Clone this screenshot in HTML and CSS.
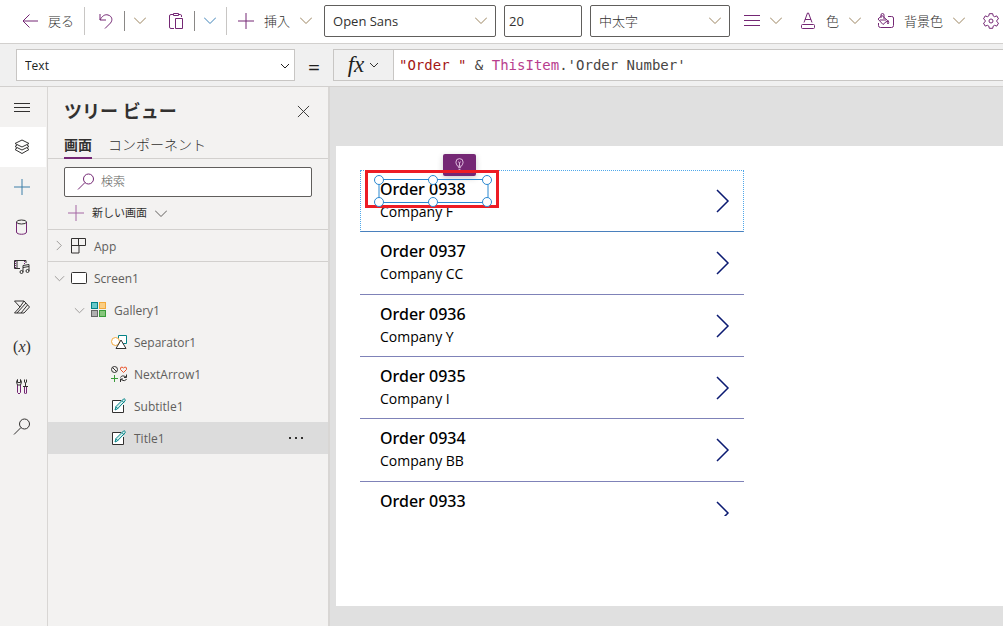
FILE: index.html
```html
<!DOCTYPE html>
<html lang="ja">
<head>
<meta charset="utf-8">
<title>ツリー ビュー</title>
<link rel="stylesheet" href="styles.css">
</head>
<body>
<svg class="defs" aria-hidden="true">
  <symbol id="chev" viewBox="0 0 12 7"><path d="M0 .5l6 6 6-6"/></symbol>
  <symbol id="plus" viewBox="0 0 16 16"><path d="M8 0v16M0 8h16"/></symbol>
  <symbol id="search" viewBox="0 0 18 18"><circle cx="11.5" cy="6" r="5"/><path d="M8 9.500L1 16.500"/></symbol>
  <symbol id="lines" viewBox="0 0 16 12"><path d="M0 .5h16M0 5.500h16M0 10.500h16"/></symbol>
  <symbol id="edit" viewBox="0 0 16 16"><path class="ink" fill="#fff" d="M10 2.500H1.500v12h11V7"/><path fill="#d7efee" stroke="#038387" d="M4 12l1-3.500L12.500 1q1-.5 1.500.3t0 1.600L6.500 10.800z"/><path stroke="#038387" d="M5 8.800l2 2M11 2.700l2 2"/></symbol>
</svg>
<header class="toolbar">
  <button class="tool back"><svg class="i16" viewBox="0 0 16 16"><path d="M16 8H1M7.500 1.500L1 8l6.500 6.500"/></svg><span>戻る</span></button>
  <i class="rule"></i>
  <button class="tool wide" aria-label="元に戻す"><svg class="i16" viewBox="0 0 16 16"><path d="M2 1v6h6M2 7C4 3 7 1 10 2c4 1 5 5 2.500 8L7 15.500"/></svg></button>
  <i class="rule short"></i>
  <button class="tool after" aria-label="元に戻すオプション"><svg class="chev"><use href="#chev"/></svg></button>
  <button class="tool clip" aria-label="貼り付け"><svg class="clipicon" viewBox="0 0 16 18"><path d="M6 16.500H3Q1.500 16.500 1.500 15V4Q1.500 2.500 3 2.500H5M11 2.500h1.500Q13.500 2.500 13.500 4v1M5.500 1.500h5v2h-5zM7.500 6.500h7v10h-7z"/></svg></button>
  <i class="rule short"></i>
  <button class="tool after blue" aria-label="貼り付けオプション"><svg class="chev"><use href="#chev"/></svg></button>
  <i class="rule"></i>
  <button class="tool insert"><svg class="i16"><use href="#plus"/></svg><span>挿入</span><svg class="chev"><use href="#chev"/></svg></button>
  <label class="field font"><select aria-label="フォント"><option>Open Sans</option></select><svg class="chev"><use href="#chev"/></svg></label>
  <label class="field size"><input aria-label="フォント サイズ" value="20"></label>
  <label class="field weight"><select aria-label="フォントの太さ"><option>中太字</option></select><svg class="chev"><use href="#chev"/></svg></label>
  <button class="tool align" aria-label="配置"><svg class="lines"><use href="#lines"/></svg><svg class="chev"><use href="#chev"/></svg></button>
  <button class="tool color"><svg class="i16" viewBox="0 0 16 16"><path d="M4 9.500L7.500 0h1L12 9.500M5 6.500h6M2.500 11.500h11q1 0 1 1v2q0 1-1 1h-11q-1 0-1-1v-2q0-1 1-1z"/></svg><span>色</span><svg class="chev"><use href="#chev"/></svg></button>
  <button class="tool fill"><svg class="fillicon" viewBox="0 0 17 16"><path d="M11 3.500h3.500q2 0 2 1.500v7.500q0 2-2 2H3.500q-2 0-2-2V10M1 6l4-3.500 5.500 5L6 11.500zM4 5V2q0-1.500 1.500-1.500T7 2v4M3 7h6M11 7.500q1.500 2 0 3.500-1.500-1.500 0-3.500"/></svg><span>背景色</span><svg class="chev"><use href="#chev"/></svg></button>
  <button class="tool gear" aria-label="設定"><svg class="i16" viewBox="0 0 16 16"><path d="M6.300.7h3.400l.5 2.200 1.400.8 2.200-.8 1.700 3-1.700 1.400v1.400l1.700 1.400-1.700 3-2.200-.8-1.400.8-.5 2.200H6.300l-.5-2.200-1.400-.8-2.200.8-1.700-3 1.700-1.400V7.300L.5 5.900l1.700-3 2.200.8 1.400-.8z"/><circle cx="8" cy="8" r="2"/></svg></button>
</header>
<section class="formula">
  <label class="prop"><select aria-label="プロパティ"><option>Text</option></select><svg class="smallchev" viewBox="0 0 10 6"><path d="M1 1l4 4 4-4"/></svg></label>
  <span class="equals">=</span>
  <button class="fx" aria-label="関数"><em>fx</em><svg class="smallchev" viewBox="0 0 10 6"><path d="M1 1l4 4 4-4"/></svg></button>
  <div class="code" role="textbox" aria-label="数式" contenteditable="true" spellcheck="false"><span class="str">"Order "</span> &amp; <span class="obj">ThisItem</span>.'Order Number'</div>
</section>
<div class="body">
  <nav class="rail">
    <button aria-label="メニュー"><svg class="lines" viewBox="0 0 16 12"><path d="M0 2.500h16M0 6.500h16M0 10.500h16"/></svg></button>
    <button class="on" aria-label="ツリー ビュー"><svg class="i16" viewBox="0 0 16 16"><path d="M8 1l7 3.500L8 8 1 4.500zM3 6L1 7.500 8 11l7-3.500L13 6M3 9l-2 1.500L8 14.500l7-4L13 9"/></svg></button>
    <button class="cross" aria-label="挿入"><svg class="i16"><use href="#plus"/></svg></button>
    <button class="violet" aria-label="データ"><svg class="i16" viewBox="0 0 16 16"><path d="M2.500 3v10c0 3 10 3 10 0V3"/><ellipse class="ink" cx="7.500" cy="3" rx="5" ry="2"/></svg></button>
    <button aria-label="メディア"><svg class="i16" viewBox="0 0 16 16"><path d="M12 4V1.500H.5v8H6M3 2v7"/><path stroke="#742774" stroke-dasharray="1 1" d="M1.500 2v7M10.500 2v3"/><path d="M9 13V6.500l6-1V12M9 8.500l6-1"/><circle cx="7.500" cy="13" r="1.500"/><circle cx="13.500" cy="12" r="1.500"/></svg></button>
    <button aria-label="Power Automate"><svg class="i16" viewBox="0 0 16 16"><path d="M.5 2H10l5.500 6-5.500 6H.5L6 8zM6 8l4-6M3 14L12 4M7 14l6.500-8"/></svg></button>
    <button class="var" aria-label="変数">(<em>x</em>)</button>
    <button class="violet" aria-label="ツール"><svg class="i16" viewBox="0 0 16 16"><path d="M3.500 6v7.500q1.500 3 3 0V6M10.500 8v6q1 2 2 0V8"/><path class="ink" d="M3.500.5Q1.500 3 3.500 6h3Q8.500 3 6.500.5v3h-3zM9 7.500h5M11.500 7.500V4M10.500.5V3l1 1 1-1V.5"/></svg></button>
    <button aria-label="検索"><svg class="i18"><use href="#search"/></svg></button>
  </nav>
  <aside class="panel">
    <div class="head"><h1>ツリー ビュー</h1><button aria-label="閉じる"><svg class="close" viewBox="0 0 14 14"><path d="M1 1l12 12M13 1L1 13"/></svg></button></div>
    <div class="tabs" role="tablist"><button role="tab" aria-selected="true">画面</button><button role="tab" aria-selected="false">コンポーネント</button></div>
    <div class="find">
      <label class="searchbox"><svg class="i18"><use href="#search"/></svg><input type="search" placeholder="検索" aria-label="検索"></label>
      <button class="new"><svg class="i16"><use href="#plus"/></svg><span>新しい画面</span><svg class="chev"><use href="#chev"/></svg></button>
    </div>
    <ul class="tree" role="tree">
      <li role="treeitem" class="app"><svg class="tw" viewBox="0 0 12 12"><path d="M3 1l5 5-5 5"/></svg><svg class="i16" viewBox="0 0 16 16"><path class="ink" d="M.5.500h14v7H8v7.500H.500zM7.500 .5v7M.5 7.500H8"/></svg><span>App</span></li>
      <li role="treeitem"><svg class="tw" viewBox="0 0 12 12"><path d="M1 3.500l5 5 5-5"/></svg><svg class="i16" viewBox="0 0 16 16"><rect class="ink" x=".5" y="2.500" width="15" height="11" rx="1" fill="#fff"/></svg><span>Screen1</span></li>
      <li role="treeitem" class="l2"><svg class="tw" viewBox="0 0 12 12"><path d="M1 3.500l5 5 5-5"/></svg><svg class="i16" viewBox="0 0 16 16"><rect x=".5" y=".5" width="6" height="6" fill="#69c8c9" stroke="#038387"/><rect x="8.500" y=".5" width="6" height="6" fill="#fbce83" stroke="#f2a93b"/><rect x=".5" y="8.500" width="6" height="6" fill="#b0b0b0" stroke="#666"/><rect x="8.500" y="8.500" width="6" height="6" fill="#86c67c" stroke="#389b39"/></svg><span>Gallery1</span></li>
      <li role="treeitem" class="l3"><svg class="i16" viewBox="0 0 16 16"><path fill="#fff" stroke="#038387" d="M7.500 1.500h8v8h-8z"/><circle cx="4.500" cy="7.500" r="4" fill="#fff" stroke="#f2a93b"/><path class="ink" fill="#fff" d="M10 6l5 8.500H5z"/></svg><span>Separator1</span></li>
      <li role="treeitem" class="l3"><svg class="i16" viewBox="0 0 16 16"><circle class="ink" cx="3.500" cy="3.500" r="3"/><path class="ink" d="M1.500 1.500l4 4M15.500 8.500V11.500H13M9.500 11.500Q11 8.500 15 11M9.500 16V13H12M15.500 13Q14 16 10 13.500"/><path stroke="#e8532b" d="M12.500 6.500l-3-3q-.5-2.500 1.500-2.500l1.500 1L14 1q2 0 1.500 2.500z"/><path stroke="#389b39" d="M3.500 9v7M0 12.500h7"/></svg><span>NextArrow1</span></li>
      <li role="treeitem" class="l3"><svg class="i16"><use href="#edit"/></svg><span>Subtitle1</span></li>
      <li role="treeitem" class="l3 on" aria-selected="true"><svg class="i16"><use href="#edit"/></svg><span>Title1</span><button class="more" aria-label="その他"><svg class="dots" viewBox="0 0 16 4"><path d="M1 1h2v2H1zM7 1h2v2H7zM13 1h2v2h-2z"/></svg></button></li>
    </ul>
  </aside>
  <main class="stage">
    <div class="screen">
      <div class="gallery">
        <ul>
          <li><div><b>Order 0938</b><span>Company F</span></div><button aria-label="次へ"><svg class="next" viewBox="0 0 14 24"><path d="M1 1l11 11L1 23"/></svg></button></li>
          <li><div><b>Order 0937</b><span>Company CC</span></div><button aria-label="次へ"><svg class="next" viewBox="0 0 14 24"><path d="M1 1l11 11L1 23"/></svg></button></li>
          <li><div><b>Order 0936</b><span>Company Y</span></div><button aria-label="次へ"><svg class="next" viewBox="0 0 14 24"><path d="M1 1l11 11L1 23"/></svg></button></li>
          <li><div><b>Order 0935</b><span>Company I</span></div><button aria-label="次へ"><svg class="next" viewBox="0 0 14 24"><path d="M1 1l11 11L1 23"/></svg></button></li>
          <li><div><b>Order 0934</b><span>Company BB</span></div><button aria-label="次へ"><svg class="next" viewBox="0 0 14 24"><path d="M1 1l11 11L1 23"/></svg></button></li>
          <li class="cut"><div><b>Order 0933</b></div><button aria-label="次へ"><svg class="next" viewBox="0 0 14 24"><path d="M1 1l11 11L1 23"/></svg></button></li>
        </ul>
        <button class="tip" aria-label="ヒント"><svg class="bulb" viewBox="0 0 10 13"><path d="M3 9Q1 6.500 1 4.500a4 4 0 0 1 8 0Q9 6.500 7 9zM3.500 10.500h3M4 12.500h2M3.500 4l1.500 1 1.500-1M5 5v4"/></svg></button>
        <div class="mark"></div>
        <svg class="handles" viewBox="0 0 120 34"><path d="M6 5.500h109v23H6z"/><g fill="#fff"><circle cx="6" cy="6" r="4.500"/><circle cx="60" cy="6" r="4.500"/><circle cx="114" cy="6" r="4.500"/><circle cx="6" cy="28" r="4.500"/><circle cx="60" cy="28" r="4.500"/><circle cx="114" cy="28" r="4.500"/></g></svg>
      </div>
    </div>
  </main>
</div>
</body>
</html>
```
FILE: styles.css
```css
* { box-sizing: border-box; }
body {
  margin: 0;
  min-height: 100vh;
  display: flex;
  flex-direction: column;
  overflow: hidden;
  background: #f3f2f1;
  color: #323130;
  font: 13px/20px "Open Sans", "Noto Sans CJK JP", sans-serif;
}
button, input, select { font: inherit; color: inherit; }
button { padding: 0; border: 0; background: none; }
select, input { appearance: none; border: 0; background: none; outline: 0; padding: 0; width: 100%; min-width: 0; }
svg { flex: none; fill: none; stroke: currentColor; display: block; overflow: visible; }
ul { list-style: none; margin: 0; padding: 0; }
.defs { position: absolute; width: 0; height: 0; }
.ink { stroke: #323130; }
.i16 { width: 16px; height: 16px; }
.i18 { width: 18px; height: 18px; }
.chev { width: 12px; height: 7px; }
.smallchev { width: 10px; height: 6px; }
.lines { width: 16px; height: 12px; }

.toolbar {
  display: flex;
  align-items: center;
  height: 44px;
  padding: 0 0 2px 22px;
  background: #fff;
  border-bottom: 1px solid #d2d0ce;
  overflow: hidden;
}
.tool { display: flex; align-items: center; gap: 10px; flex: none; color: #742774; white-space: nowrap; }
.tool span { color: #323130; font-weight: 300; }
.tool .chev { color: #9a835e; }
.tool.blue .chev { color: #3f82b8; }
.rule { flex: none; width: 1px; height: 28px; background: #c8c6c4; margin-left: 10px; }
.rule.short { height: 20px; background: #8a8886; }
.wide { margin-left: 13px; }
.after { margin-left: 9px; }
.clip { margin-left: 22px; }
.clipicon { width: 16px; height: 18px; }
.insert { margin: 0 12px 0 11px; }
.field { display: flex; align-items: center; flex: none; height: 32px; padding: 0 8px; border: 1px solid #605e5c; border-radius: 2px; margin-right: 8px; }
.field .chev { color: #9a835e; }
.font { width: 172px; }
.size { width: 78px; padding: 0 4px; }
.weight { width: 140px; margin-right: 14px; }
.weight select { font-weight: 300; }
.color { margin-left: 18px; }
.fill { margin-left: 16px; }
.fillicon { width: 17px; height: 16px; }
.gear { margin-left: 18px; }

.formula { display: flex; height: 43px; padding: 5px 0 5px 16px; border-bottom: 1px solid #d2d0ce; background: #f0f0f0; }
.prop { display: flex; align-items: center; flex: none; width: 279px; height: 32px; padding: 2px 4px 0 8px; border: 1px solid #c8c6c4; background: #fff; font-size: 12px; color: #201f1e; }
.equals { width: 38px; text-align: center; font-size: 21px; line-height: 36px; color: #201f1e; }
.fx { display: flex; align-items: center; justify-content: center; gap: 5px; flex: none; width: 61px; height: 32px; border: 1px solid #c8c6c4; }
.fx em { font: italic 400 23px/24px "Liberation Serif", serif; color: #201f1e; }
.code { flex: 1; min-width: 0; height: 32px; padding: 0 5px; border: 1px solid #c8c6c4; border-width: 1px 0; background: #fff; font: 14px/30px "DejaVu Sans Mono", monospace; white-space: pre; overflow: hidden; color: #484644; }
.str { color: #a31515; }
.obj { color: #b83e8e; }

.body { display: flex; flex: 1; }
.rail { flex: none; width: 48px; border-right: 1px solid #d8d6d4; }
.rail button { display: flex; align-items: center; justify-content: center; width: 46px; height: 40px; padding-right: 2px; }
.rail .on { background: #fff; }
.rail .cross { color: #3c7ea8; }
.rail .violet { color: #742774; }
.rail .var { font: 16px/20px "Liberation Serif", serif; }

.panel { flex: none; width: 282px; border-right: 2px solid #d8d6d4; }
.head { display: flex; align-items: center; justify-content: space-between; height: 48px; padding: 0 18px 0 16px; }
h1 { margin: 0; font-size: 18px; line-height: 24px; font-weight: 600; }
.close { width: 13px; height: 13px; }
.tabs { display: flex; gap: 16px; height: 24px; padding: 0 16px; border-bottom: 1px solid #d2d0ce; font-size: 14px; }
.tabs button { height: 24px; padding-bottom: 4px; font-weight: 300; line-height: 20px; white-space: nowrap; }
.tabs [aria-selected="true"] { font-weight: 600; border-bottom: 2px solid #742774; padding-bottom: 2px; }
.find { height: 71px; padding: 8px 16px 0; border-bottom: 1px solid #d2d0ce; }
.searchbox { display: flex; align-items: center; gap: 6px; height: 30px; padding: 0 12px; border: 1px solid #605e5c; border-radius: 2px; background: #fff; color: #742774; font-size: 12px; }
.searchbox input::placeholder { color: #605e5c; font-weight: 300; }
.new { display: flex; align-items: center; gap: 8px; height: 32px; padding-left: 4px; color: #605e5c; font-size: 11px; }
.new .i16 { color: #a467a4; }
.new span { color: #323130; }

.tree li { display: flex; align-items: center; height: 32px; padding-left: 6px; font-size: 12px; color: #605e5c; }
.tree li > span { margin-left: 7px; padding-top: 2px; }
.tree .app { border-bottom: 1px solid #d2d0ce; }
.tw { width: 11px; height: 11px; margin-right: 6px; color: #979593; }
.tree .l2 { padding-left: 26px; }
.tree .l3 { padding-left: 63px; }
.tree .on { background: #dcdcdc; }
.more { margin: 0 24px 0 auto; }
.dots { width: 16px; height: 4px; fill: #323130; stroke: none; }

.stage { flex: 1; min-width: 0; padding: 59px 0 20px 6px; background: #e0e0e0; }
.screen { height: 100%; padding: 24px; background: #fff; }
.gallery { position: relative; width: 384px; }
.gallery li { display: flex; justify-content: space-between; height: 62px; padding: 8px 14px 0 20px; border-bottom: 1px solid #7f82b8; color: #000; }
.gallery li:nth-child(3n+2) { height: 63px; }
.gallery li:first-child { border: 1px dotted #4fa8ea; border-bottom: 1px solid #4a80bd; padding: 7px 13px 0 19px; }
.gallery li.cut { height: 34px; border: 0; overflow: hidden; }
.gallery b { display: block; font-family: "Noto Sans", "Open Sans", sans-serif; font-size: 16px; line-height: 22px; font-weight: 500; }
.gallery li span { display: block; font-size: 14px; line-height: 23px; }
.gallery li button { display: flex; height: 46px; align-items: center; color: #0b1a72; }
.next { width: 14px; height: 24px; stroke-width: 1.5; }
.tip { position: absolute; left: 83px; top: -16px; width: 33px; height: 22px; display: flex; justify-content: center; padding-top: 4px; border-radius: 2px; background: #742774; color: #e8c9e8; box-shadow: 0 2px 6px #0003; }
.bulb { width: 9px; height: 12px; }
.mark { position: absolute; left: 5px; top: 0; width: 134px; height: 38px; border: 3px solid #ed1c24; }
.handles { position: absolute; left: 13px; top: 4px; width: 120px; height: 34px; stroke: #2b88d0; }
```
